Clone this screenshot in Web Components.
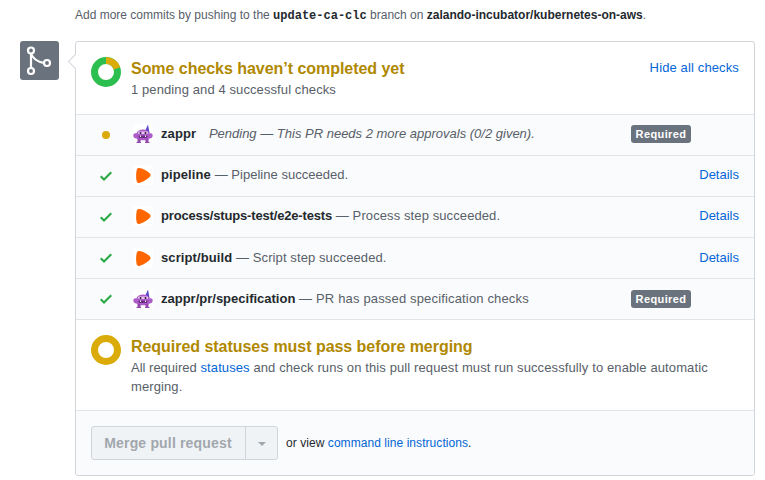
<!DOCTYPE html>
<html>
<head>
<meta charset="utf-8">
<title>Checks</title>
<style>
    body {
        margin: 0;
        background: #fff;
        font: 13px/1.5 "Liberation Sans", Arial, sans-serif;
        color: #24292e;
    }
    .mono {
        font-family: "Liberation Mono", monospace;
        color: #24292e;
    }
    merge-box b {
        color: #24292e;
    }
</style>
</head>
<body>
<merge-box>
    <span slot="hint">Add more commits by pushing to the <b class="mono">update-ca-clc</b> branch on <b>zalando-incubator/kubernetes-on-aws</b>.</span>
</merge-box>

<script>
const ZAPPR = `<svg width="20" height="20" viewBox="0 0 20 20">
    <rect width="20" height="20" rx="3" fill="#fff"/>
    <path d="M12.500 6L15 .5l1 5.500.5 3h-4z" fill="#5a48c8"/>
    <path d="M.3 11.500c0-1.800 1.500-2.500 3-2 .8-2.800 3.700-4 6.700-4s5.900 1.200 6.700 4c1.500-.5 3 .2 3 2s-1.500 3-3 3c-1.300 1.300-4 1.800-6.700 1.800s-5.400-.5-6.700-1.800c-1.500 0-3-1.200-3-3z" fill="#ac5cc9"/>
    <rect x="4.500" y="15" width="3" height="3.500" fill="#9248ad"/>
    <rect x="12.500" y="15" width="3" height="3.500" fill="#9248ad"/>
    <rect x="3.500" y="18" width="4.500" height="1" fill="#9248ad"/>
    <rect x="12" y="18" width="4.500" height="1" fill="#9248ad"/>
    <rect x="5" y="7.500" width="10" height="2.500" rx="1" fill="#e8c6f0"/>
    <rect x="5.500" y="11.500" width="9" height="2.500" rx="1" fill="#6a2c82"/>
    <rect x="7" y="11.500" width="1" height="1.500" fill="#fff"/>
    <rect x="12" y="11.500" width="1" height="1.500" fill="#fff"/>
    <circle cx="7.500" cy="9" r="1" fill="#35163f"/>
    <circle cx="12.500" cy="9" r="1" fill="#35163f"/>
</svg>`;

const ORANGE = `<svg width="20" height="20" viewBox="0 0 20 20">
    <rect width="20" height="20" rx="3" fill="#fff"/>
    <path d="M5.500 3c3-.6 9.500 3.200 11.500 5.600.8 1 .8 2 0 3-2 2.400-8 6.100-11 6.400-1.300.1-2-.5-2.300-1.700-.8-3-.8-7.800 0-11 .2-1.200.8-2 1.800-2.300z" fill="#f60"/>
</svg>`;

class CheckRow extends HTMLElement {
    constructor() {
        super();
        this.attachShadow({ mode: 'open' });
    }

    connectedCallback() {
        const state = this.getAttribute('state');
        const icon = this.getAttribute('icon') === 'zappr' ? ZAPPR : ORANGE;
        const mark = state === 'pending'
            ? '<span class="dot"></span>'
            : `<svg width="12" height="16" viewBox="0 0 12 16"><path fill-rule="evenodd" fill="#28a745" d="M12 5l-8 8-4-4 1.500-1.500L4 10l6.500-6.500L12 5z"/></svg>`;
        let right = '';
        if (this.hasAttribute('required')) {
            right = '<span class="badge">Required</span>';
        }
        if (this.hasAttribute('details')) {
            right = '<a class="details">Details</a>';
        }
        this.shadowRoot.innerHTML = `
            <style>
                :host {
                    display: flex;
                    align-items: center;
                    height: 40px;
                    padding: 0 15px;
                    border-top: 1px solid #e1e4e8;
                    background: #fafbfc;
                    color: #586069;
                    font-size: 13px;
                }
                :host([raised]) .icon,
                :host([raised]) .text,
                :host([raised]) .right {
                    margin-top: -2px;
                }
                .mark {
                    display: flex;
                    justify-content: center;
                    align-items: center;
                    width: 30px;
                    margin-right: 12px;
                }
                .dot {
                    width: 8px;
                    height: 8px;
                    border-radius: 50%;
                    background: #dbab09;
                }
                .icon {
                    display: flex;
                    width: 20px;
                    height: 20px;
                    margin-right: 8px;
                }
                .text {
                    flex: 1;
                    white-space: nowrap;
                    letter-spacing: .1px;
                }
                .right {
                    flex: none;
                }
                .badge {
                    display: block;
                    width: 60px;
                    margin-right: 48px;
                    box-sizing: border-box;
                    text-align: center;
                    background: #6a737d;
                    color: #fff;
                    font-size: 11px;
                    font-weight: 700;
                    line-height: 18px;
                    letter-spacing: .4px;
                    border-radius: 3px;
                }
                .details {
                    color: #0366d6;
                }
            </style>
            <div class="mark">${mark}</div>
            <div class="icon">${icon}</div>
            <div class="text"><slot></slot></div>
            <div class="right">${right}</div>
        `;
    }
}

class MergeBox extends HTMLElement {
    constructor() {
        super();
        this.attachShadow({ mode: 'open' });
        this.shadowRoot.innerHTML = `
            <style>
                :host {
                    display: block;
                    padding: 6px 10px 0 20px;
                    color: #586069;
                    font-size: 12px;
                    line-height: 18px;
                }
                ::slotted(span) {
                    display: block;
                    margin-left: 55px;
                }
                .wrap {
                    display: flex;
                    margin-top: 16px;
                }
                .branch {
                    flex: none;
                    display: flex;
                    width: 39px;
                    height: 39px;
                    background: #6a737d;
                    border-radius: 3px;
                }
                .box {
                    position: relative;
                    flex: 1;
                    margin-left: 16px;
                    border: 1px solid #d1d5da;
                    border-radius: 3px;
                }
                .box::before {
                    content: "";
                    position: absolute;
                    left: -6px;
                    top: 14px;
                    width: 10px;
                    height: 10px;
                    background: #fff;
                    border-left: 1px solid #d1d5da;
                    border-bottom: 1px solid #d1d5da;
                    transform: rotate(45deg);
                }
                .head {
                    position: relative;
                    display: flex;
                    height: 72px;
                    padding: 15px 15px 0;
                    box-sizing: border-box;
                }
                .ring {
                    flex: none;
                    margin-right: 10px;
                }
                .grow {
                    flex: 1;
                }
                h3 {
                    margin: 0;
                    color: #b08800;
                    font-size: 16px;
                    font-weight: 700;
                    line-height: 24px;
                    letter-spacing: -.04px;
                }
                p {
                    margin: -1px 0 0;
                    color: #586069;
                    font-size: 13px;
                    line-height: 19px;
                    letter-spacing: .1px;
                }
                a {
                    color: #0366d6;
                }
                .hide {
                    font-size: 13px;
                    line-height: 22px;
                    letter-spacing: .13px;
                    white-space: nowrap;
                }
                .req {
                    display: flex;
                    height: 91px;
                    padding: 15px 16px 0 15px;
                    box-sizing: border-box;
                    border-top: 1px solid #e1e4e8;
                }
                .merge {
                    display: flex;
                    align-items: center;
                    height: 64px;
                    padding: 0 15px;
                    border-top: 1px solid #e1e4e8;
                    background: #fafbfc;
                    font-size: 12px;
                    letter-spacing: .06px;
                    color: #24292e;
                    border-radius: 0 0 3px 3px;
                }
                .btn {
                    display: flex;
                    height: 34px;
                    box-sizing: border-box;
                    border: 1px solid #d1d5da;
                    border-radius: 3px;
                    background: #eff3f6;
                    color: #a2a7ad;
                    font-size: 14px;
                    font-weight: 700;
                    line-height: 32px;
                    margin-right: 8px;
                }
                .btn span {
                    width: 153px;
                    box-sizing: border-box;
                    padding-right: 1px;
                    text-align: center;
                    letter-spacing: .17px;
                }
                .btn i {
                    display: flex;
                    justify-content: center;
                    align-items: center;
                    width: 31px;
                    border-left: 1px solid #d1d5da;
                }
                .btn i::after {
                    content: "";
                    margin-top: 2px;
                    border: 4px solid transparent;
                    border-top-color: #a2a7ad;
                    border-bottom: 0;
                }
            </style>
            <slot name="hint"></slot>
            <div class="wrap">
                <div class="branch">
                    <svg width="39" height="39" viewBox="0 0 39 39" fill="none" stroke="#fff" stroke-width="2.200">
                        <circle cx="11" cy="9.500" r="3"/>
                        <circle cx="11" cy="30" r="3"/>
                        <circle cx="27" cy="22" r="3"/>
                        <path d="M11 12.500v14.500"/>
                        <path d="M11 12.500c1 3 3 7.500 13 9.500" />
                        <path d="M11.500 14l1 2.500 0 -2z" fill="#fff" stroke="none"/>
                    </svg>
                </div>
                <div class="box">
                    <div class="head">
                        <svg class="ring" width="30" height="30" viewBox="0 0 30 30" fill="none" stroke-width="7">
                            <circle cx="15" cy="15" r="11.500" stroke="#2cbe4e"/>
                            <path d="M15 3.500A11.500 11.500 0 0 1 25.940 11.450" stroke="#dbab09"/>
                        </svg>
                        <div class="grow">
                            <h3>Some checks haven’t completed yet</h3>
                            <p>1 pending and 4 successful checks</p>
                        </div>
                        <a class="hide">Hide all checks</a>
                    </div>
                    <check-row raised state="pending" icon="zappr" required><b style="color:#24292e">zappr</b> <i style="margin-left:9px;letter-spacing:0">Pending — This PR needs 2 more approvals (0/2 given).</i></check-row>
                    <check-row raised icon="orange" details><b style="color:#24292e">pipeline</b> <span style="letter-spacing:.03px">— Pipeline succeeded.</span></check-row>
                    <check-row raised icon="orange" details><b style="color:#24292e;letter-spacing:-.16px">process/stups-test/e2e-tests</b> — Process step succeeded.</check-row>
                    <check-row icon="orange" details><b style="color:#24292e">script/build</b> — Script step succeeded.</check-row>
                    <check-row icon="zappr" required><b style="color:#24292e;letter-spacing:0">zappr/pr/specification</b> <span style="letter-spacing:.16px">— PR has passed specification checks</span></check-row>
                    <div class="req">
                        <svg class="ring" width="30" height="30" viewBox="0 0 30 30" fill="none" stroke="#dbab09" stroke-width="7">
                            <circle cx="15" cy="15" r="11.500"/>
                        </svg>
                        <div class="grow">
                            <h3>Required statuses must pass before merging</h3>
                            <p><span style="letter-spacing:0">All required</span> <a>statuses</a> <span style="letter-spacing:.11px">and check runs on this pull request must run successfully to enable automatic</span><br><span>merging.</span></p>
                        </div>
                    </div>
                    <div class="merge">
                        <div class="btn"><span>Merge pull request</span><i></i></div>
                        or view&nbsp;<a>command line instructions</a>.
                    </div>
                </div>
            </div>
        `;
    }
}

customElements.define('check-row', CheckRow);
customElements.define('merge-box', MergeBox);
</script>
</body>
</html>
